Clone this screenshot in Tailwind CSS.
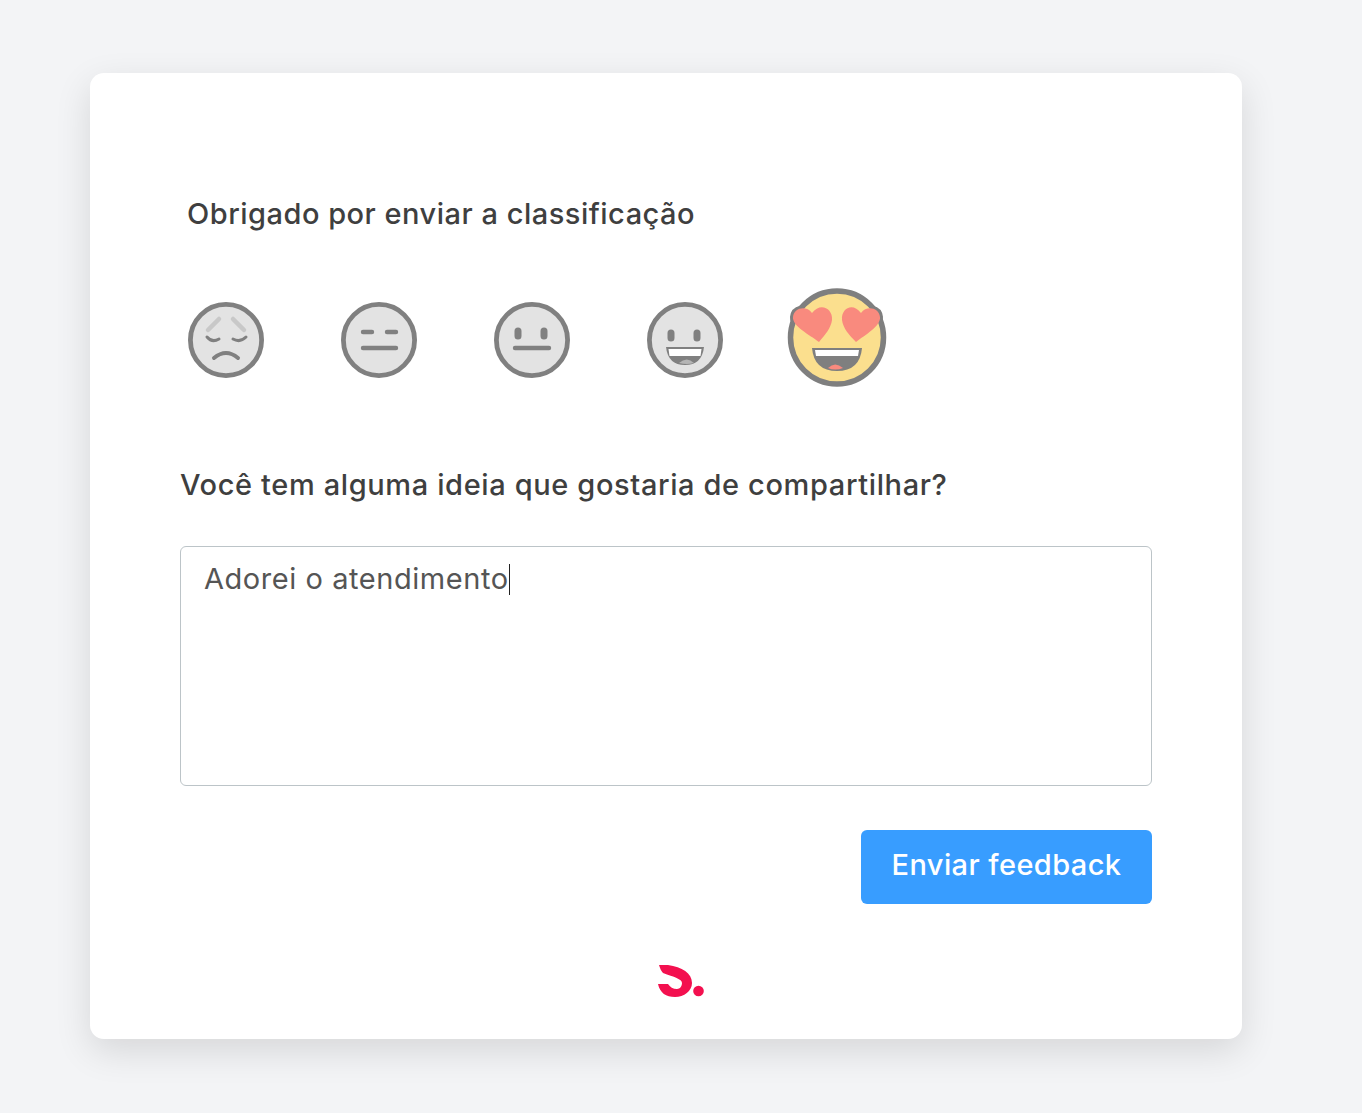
<!DOCTYPE html>
<html lang="pt-BR">
<head>
  <meta charset="UTF-8" />
  <title>Feedback</title>
  <script src="https://cdn.jsdelivr.net/npm/@tailwindcss/browser@4"></script>
</head>
<body class="h-[1113px] overflow-hidden bg-[#f3f4f6] font-['Inter',sans-serif]">
  <main class="ml-[90px] mt-[73px] w-[1152px] h-[966px] bg-white rounded-[14px] shadow-[0_12px_36px_rgba(0,0,0,0.12)] pl-[90px] pr-[90px] pt-[121px] flex flex-col absolute">
    <h1 class="ml-[7px] text-[29px] leading-[40px] text-[#3f3f3f] font-[450] tracking-[0.5px]">Obrigado por enviar a classificação</h1>

    <!-- emoji rating row -->
    <div class="ml-[8px] mt-[54px] h-[100px] flex items-center gap-[77px]">
      <svg class="w-[76px] h-[76px] mt-[3px]" viewBox="0 0 76 76" fill="none" stroke-linecap="round">
        <circle cx="38" cy="38" r="35.6" fill="#e3e3e3" stroke="#808080" stroke-width="4.8"/>
        <path d="M20 28 L31 17 M45 17 L56 28" stroke="#c8c8c8" stroke-width="4.5"/>
        <path d="M19 35 Q24 41 31 37 M45 37 Q52 41 58 35" stroke="#808080" stroke-width="3"/>
        <path d="M26 56 Q38 46 50 56" stroke="#808080" stroke-width="4"/>
      </svg>
      <svg class="w-[76px] h-[76px] mt-[3px]" viewBox="0 0 76 76" fill="none" stroke-linecap="round">
        <circle cx="38" cy="38" r="35.6" fill="#e3e3e3" stroke="#808080" stroke-width="4.8"/>
        <path d="M22 30 H31 M46 30 H55 M22 46 H55" stroke="#808080" stroke-width="4.4"/>
      </svg>
      <svg class="w-[76px] h-[76px] mt-[3px]" viewBox="0 0 76 76" fill="none" stroke-linecap="round">
        <circle cx="38" cy="38" r="35.6" fill="#e3e3e3" stroke="#808080" stroke-width="4.8"/>
        <path d="M24 29 V34 M50 29 V34" stroke="#808080" stroke-width="7"/>
        <path d="M21 46 H55" stroke="#808080" stroke-width="4.4"/>
      </svg>
      <svg class="w-[76px] h-[76px] mt-[3px]" viewBox="0 0 76 76" fill="none" stroke-linecap="round">
        <circle cx="38" cy="38" r="35.6" fill="#e3e3e3" stroke="#808080" stroke-width="4.8"/>
        <path d="M24 31 V36 M50 31 V36" stroke="#808080" stroke-width="7"/>
        <path d="M19 45 H57 Q55 63 38 63 Q21 63 19 45 Z" fill="#808080"/>
        <path d="M21.5 47 H54.5 L53.5 54 H22.5 Z" fill="#fff"/>
        <path d="M32 61 Q40 54 47 61 Q40 63 32 61 Z" fill="#b5b5b5"/>
      </svg>
      <svg class="w-[100px] h-[100px] -ml-[12px] overflow-visible" viewBox="0 0 100 100" fill="none">
        <!-- grey rim pokes out round the hearts, drawn under the face -->
        <path d="M31 54 C22 47 4 38 5 29 C6 20 18 17 24 25 C32 14 45 20 44 32 C43 40 37 47 31 54 Z M68 54 C77 47 93 38 92 29 C91 20 79 17 73 25 C65 14 53 20 54 32 C55 40 61 47 68 54 Z" fill="#7f7f7f" stroke="#7f7f7f" stroke-width="6"/>
        <circle cx="49" cy="49.5" r="46.5" fill="#fbdf8e" stroke="#7f7f7f" stroke-width="5.5"/>
        <path d="M31 54 C22 47 4 38 5 29 C6 20 18 17 24 25 C32 14 45 20 44 32 C43 40 37 47 31 54 Z" fill="#f98a7e"/>
        <path d="M68 54 C77 47 93 38 92 29 C91 20 79 17 73 25 C65 14 53 20 54 32 C55 40 61 47 68 54 Z" fill="#f98a7e"/>
        <path d="M24 60 H74 Q72 83 49 83 Q26 83 24 60 Z" fill="#7f7f7f"/>
        <path d="M27 62 H71 L70 68 H28 Z" fill="#fff"/>
        <path d="M40 80 Q47 73 55 80 Q47 83 40 80 Z" fill="#f98a7e"/>
      </svg>
    </div>

    <h2 class="mt-[77px] text-[29px] leading-[40px] text-[#3f3f3f] font-[450] tracking-[0.62px]">Você tem alguma ideia que gostaria de compartilhar?</h2>

    <div class="mt-[41px] h-[240px] border border-[#bcc4c8] rounded-[6px] px-[23px] py-[13px] text-[29px] leading-[38px] text-[#555] tracking-[0.55px]">Adorei o atendimento<span class="inline-block w-px h-[31px] bg-[#222] align-[-6px]"></span></div>

    <div class="mt-[44px] flex justify-end">
      <button class="w-[291px] h-[74px] pb-[5px] bg-[#389dff] rounded-[6px] text-white text-[29px] font-medium tracking-[0.42px]">Enviar feedback</button>
    </div>

    <!-- logo -->
    <svg class="mt-[61px] ml-[478px] w-[48px] h-[32px]" viewBox="0 0 48 32" fill="none">
      <path d="M1 0 H10 C24 2 34 8 34 18 C34 26 26 32 17 32 C8 32 2 28 0 19 H10 C12 22 15 24 19 24 C22 24 24 21 24 18 C24 14 16 12 5 8 C3 6 2 3 1 0 Z" fill="#f3104f"/>
      <circle cx="40.5" cy="26" r="5.3" fill="#f3104f"/>
    </svg>
  </main>
</body>
</html>
